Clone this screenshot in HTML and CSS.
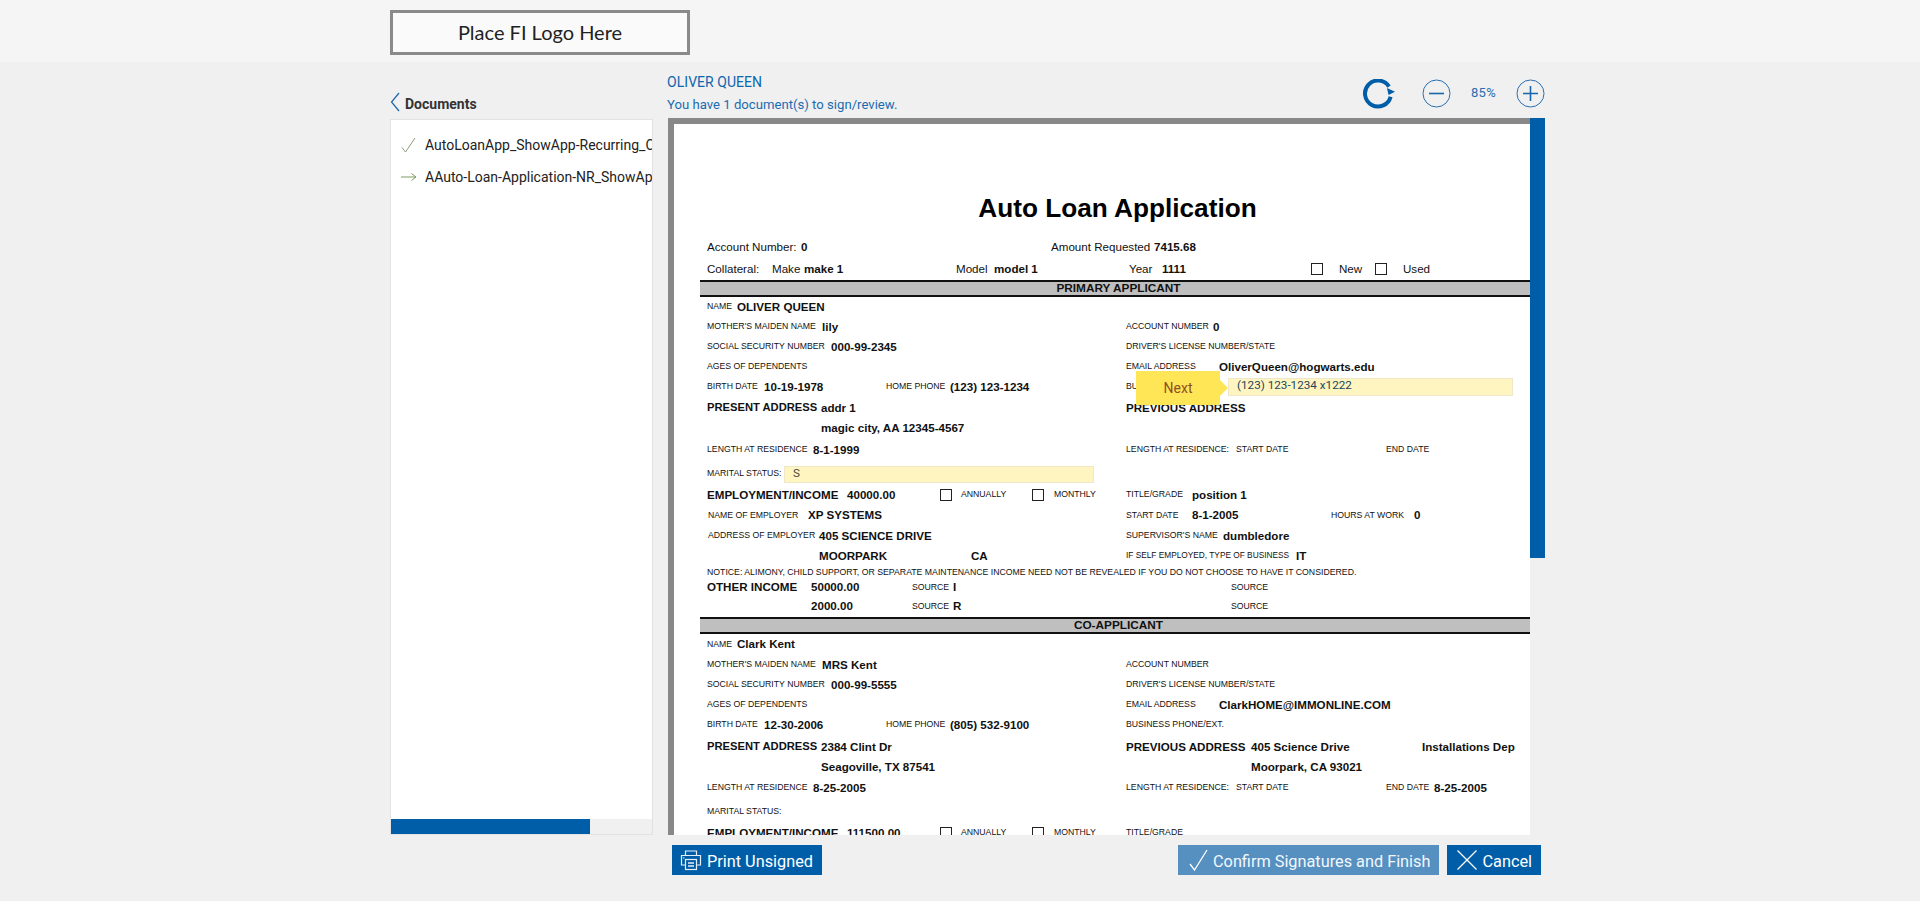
FILE: index.html
```html
<!DOCTYPE html>
<html lang="en">
<head>
<meta charset="utf-8">
<title>Auto Loan Application</title>
<link rel="stylesheet" href="styles.css">
</head>
<body>
<header class="topbar">
  <div class="container"><div class="logo">Place FI Logo Here</div></div>
</header>
<main class="container layout">
  <aside class="sidebar">
    <div class="side-head">
      <svg class="chevron" width="10" height="20" viewBox="0 0 10 20"><path d="M9 1 1.5 10 9 19" fill="none" stroke="#1a66aa" stroke-width="1.2"/></svg>
      <span class="side-title">Documents</span>
    </div>
    <div class="doc-panel">
      <ul class="doc-list">
        <li class="doc-item">
          <svg class="doc-icon" width="16" height="16" viewBox="0 0 16 16"><path d="M1 10.5 4.5 15 14 1" fill="none" stroke="#8f9c7c" stroke-width="1"/></svg>
          <span class="doc-name">AutoLoanApp_ShowApp-Recurring_Charges</span>
        </li>
        <li class="doc-item">
          <svg class="doc-icon" width="16" height="16" viewBox="0 0 16 16"><path d="M0 8H15M10.5 4.5 15 8l-4.5 3.5" fill="none" stroke="#7f9a60" stroke-width="1"/></svg>
          <span class="doc-name">AAuto-Loan-Application-NR_ShowApp-Recurring</span>
        </li>
      </ul>
      <div class="hscroll"><div class="hthumb"></div></div>
    </div>
  </aside>
  <section class="content">
    <div class="content-head">
      <div class="who">
        <div class="who-name">OLIVER QUEEN</div>
        <div class="who-note">You have 1 document(s) to sign/review.</div>
      </div>
      <div class="tools">
        <svg class="reload" width="33" height="30" viewBox="0 0 33 30"><path d="M27.6 17.7A13 13 0 1 1 26 7.6" fill="none" stroke="#005ea8" stroke-width="4"/><path d="M32 12.7 24 9l1.5 7z" fill="#005ea8"/></svg>
        <svg class="zoom-btn" width="29" height="29" viewBox="0 0 29 29"><circle cx="14.5" cy="14.5" r="13.5" fill="none" stroke="#2a6fb0"/><path d="M7 14.5H22" stroke="#1a66aa" stroke-width="1.6"/></svg>
        <span class="zoom-val">85%</span>
        <svg class="zoom-btn" width="29" height="29" viewBox="0 0 29 29"><circle cx="14.5" cy="14.5" r="13.5" fill="none" stroke="#2a6fb0"/><path d="M7 14.5H22M14.5 7V22" stroke="#1a66aa" stroke-width="1.6"/></svg>
      </div>
    </div>
    <div class="viewer">
      <div class="pdf">
        <article class="page">
          <h1 class="title">Auto Loan Application</h1>
          <div class="row h21 txt"><span class="w94">Account Number:</span><b class="w250">0</b><span class="w103">Amount Requested</span><b>7415.68</b></div>
          <div class="row h22 txt"><span class="w65">Collateral:</span><span class="w32">Make</span><b class="w152">make 1</b><span class="w38">Model</span><b class="w135">model 1</b><span class="w33">Year</span><b class="w149">1111</b><i class="cb m16"></i><span class="w36">New</span><i class="cb m16"></i><span>Used</span></div>
          <div class="band">PRIMARY APPLICANT</div>

          <div class="row h20"><div class="left"><small class="w30">NAME</small><b>OLIVER QUEEN</b></div></div>
          <div class="row h20"><div class="left"><small class="w115">MOTHER'S MAIDEN NAME</small><b>lily</b></div><div class="right"><small class="w87">ACCOUNT NUMBER</small><b>0</b></div></div>
          <div class="row h20"><div class="left"><small class="w124">SOCIAL SECURITY NUMBER</small><b>000-99-2345</b></div><div class="right"><small>DRIVER'S LICENSE NUMBER/STATE</small></div></div>
          <div class="row h20"><div class="left"><small>AGES OF DEPENDENTS</small></div><div class="right"><small class="w93">EMAIL ADDRESS</small><b>OliverQueen@hogwarts.edu</b></div></div>
          <div class="row h20"><div class="left"><small class="w57">BIRTH DATE</small><b class="w122">10-19-1978</b><small class="w64">HOME PHONE</small><b>(123) 123-1234</b></div><div class="right"><small class="w102 covered">BUSINESS PHONE/EXT.</small><span class="field field-phone">(123) 123-1234 x1222</span></div></div>
          <div class="row h22"><div class="left"><b class="w114 narrow">PRESENT ADDRESS</b><b>addr 1</b></div><div class="right"><b>PREVIOUS ADDRESS</b></div></div>
          <div class="row h18"><div class="left"><span class="w114"></span><b>magic city, AA 12345-4567</b></div></div>
          <div class="row h26"><div class="left"><small class="w106">LENGTH AT RESIDENCE</small><b>8-1-1999</b></div><div class="right"><small class="w110">LENGTH AT RESIDENCE:</small><small class="w150">START DATE</small><small>END DATE</small></div></div>
          <div class="row h22"><div class="left"><small class="w77">MARITAL STATUS:</small><span class="field field-status">S</span></div></div>
          <div class="row h20"><div class="left"><b class="w140">EMPLOYMENT/INCOME</b><b class="w93">40000.00</b><i class="cb m9"></i><small class="w71">ANNUALLY</small><i class="cb m10"></i><small>MONTHLY</small></div><div class="right"><small class="w66">TITLE/GRADE</small><b>position 1</b></div></div>
          <div class="row h21"><div class="left nudge"><small class="w100">NAME OF EMPLOYER</small><b>XP SYSTEMS</b></div><div class="right"><small class="w66">START DATE</small><b class="w139">8-1-2005</b><small class="w83">HOURS AT WORK</small><b>0</b></div></div>
          <div class="row h20"><div class="left nudge"><small class="w111">ADDRESS OF EMPLOYER</small><b>405 SCIENCE DRIVE</b></div><div class="right"><small class="w97">SUPERVISOR'S NAME</small><b>dumbledore</b></div></div>
          <div class="row h20"><div class="left"><span class="w112"></span><b class="w152">MOORPARK</b><b>CA</b></div><div class="right"><small class="w170 tight">IF SELF EMPLOYED, TYPE OF BUSINESS</small><b>IT</b></div></div>
          <div class="row h13"><small class="notice">NOTICE: ALIMONY, CHILD SUPPORT, OR SEPARATE MAINTENANCE INCOME NEED NOT BE REVEALED IF YOU DO NOT CHOOSE TO HAVE IT CONSIDERED.</small></div>
          <div class="row h17"><div class="left"><b class="w104">OTHER INCOME</b><b class="w101">50000.00</b><small class="w41">SOURCE</small><b>I</b></div><div class="right"><span class="w105"></span><small>SOURCE</small></div></div>
          <div class="row h21"><div class="left"><span class="w104"></span><b class="w101">2000.00</b><small class="w41">SOURCE</small><b>R</b></div><div class="right"><span class="w105"></span><small>SOURCE</small></div></div>
          <div class="band">CO-APPLICANT</div>

          <div class="row h21"><div class="left"><small class="w30">NAME</small><b>Clark Kent</b></div></div>
          <div class="row h20"><div class="left"><small class="w115">MOTHER'S MAIDEN NAME</small><b>MRS Kent</b></div><div class="right"><small>ACCOUNT NUMBER</small></div></div>
          <div class="row h20"><div class="left"><small class="w124">SOCIAL SECURITY NUMBER</small><b>000-99-5555</b></div><div class="right"><small>DRIVER'S LICENSE NUMBER/STATE</small></div></div>
          <div class="row h20"><div class="left"><small>AGES OF DEPENDENTS</small></div><div class="right"><small class="w93">EMAIL ADDRESS</small><b>ClarkHOME@IMMONLINE.COM</b></div></div>
          <div class="row h20"><div class="left"><small class="w57">BIRTH DATE</small><b class="w122">12-30-2006</b><small class="w64">HOME PHONE</small><b>(805) 532-9100</b></div><div class="right"><small>BUSINESS PHONE/EXT.</small></div></div>
          <div class="row h24"><div class="left"><b class="w114 narrow">PRESENT ADDRESS</b><b>2384 Clint Dr</b></div><div class="right"><b class="w125">PREVIOUS ADDRESS</b><b class="w171">405 Science Drive</b><b>Installations Dep</b></div></div>
          <div class="row h16"><div class="left"><span class="w114"></span><b>Seagoville, TX 87541</b></div><div class="right"><span class="w125"></span><b>Moorpark, CA 93021</b></div></div>
          <div class="row h26"><div class="left"><small class="w106">LENGTH AT RESIDENCE</small><b>8-25-2005</b></div><div class="right"><small class="w110">LENGTH AT RESIDENCE:</small><small class="w150">START DATE</small><small class="w48">END DATE</small><b>8-25-2005</b></div></div>
          <div class="row h22"><div class="left"><small>MARITAL STATUS:</small></div></div>
          <div class="row h20"><div class="left"><b class="w140">EMPLOYMENT/INCOME</b><b class="w93">111500.00</b><i class="cb m9"></i><small class="w71">ANNUALLY</small><i class="cb m10"></i><small>MONTHLY</small></div><div class="right"><small>TITLE/GRADE</small></div></div>

          <div class="next-tip">Next</div>
        </article>
      </div>
      <div class="vscroll"><div class="vthumb"></div></div>
    </div>
    <div class="actions">
      <button class="btn" type="button">
        <svg class="btn-icon" width="22" height="21" viewBox="0 0 22 21"><g fill="none" stroke="#e6eef8" stroke-width="1.2"><path d="M5.5 5V1h11v4"/><path d="M5 15H1.5V5.5h19V15H17"/><rect x="5.5" y="9.5" width="11" height="10"/><path d="M8 13h6M8 16h6" stroke-width="1.4"/><path d="M3 8h1.5"/></g></svg>
        Print Unsigned
      </button>
      <div class="actions-right">
        <button class="btn btn-muted" type="button">
          <svg class="btn-icon" width="19" height="22" viewBox="0 0 19 22"><path d="M1 15 5.5 21 18 1" fill="none" stroke="#fff" stroke-width="1.3"/></svg>
          Confirm Signatures and Finish
        </button>
        <button class="btn" type="button">
          <svg class="btn-icon" width="20" height="20" viewBox="0 0 20 20"><path d="M0.5 0.5 19.5 19.5M19.5 0.5 0.5 19.5" fill="none" stroke="#fff" stroke-width="1.3"/></svg>
          Cancel
        </button>
      </div>
    </div>
  </section>
</main>
</body>
</html>
```
FILE: styles.css
```css
* { box-sizing: border-box; }
html, body { margin: 0; height: 901px; overflow: hidden; }
body { background: #f0f0f0; font-family: Roboto, "Liberation Sans", sans-serif; color: #333; }

.container { width: 1170px; margin: 0 auto; padding-left: 15px; }

.topbar { background: #f5f5f5; height: 62px; padding-top: 10px; }
.logo { width: 300px; height: 45px; padding-bottom: 2px; border: 3px solid #8a8a8a; background: #fafafa; display: flex; align-items: center; justify-content: center; font-family: Lato, sans-serif; font-size: 20px; color: #222; }

.layout { display: flex; height: 839px; }

.sidebar { width: 263px; margin-right: 15px; flex: none; }
.side-head { height: 57px; display: flex; align-items: flex-end; padding-bottom: 5px; }
.chevron { margin-right: 5px; margin-bottom: 2px; flex: none; }
.side-title { font-size: 14px; font-weight: 700; line-height: 20px; color: #333; }
.doc-panel { height: 716px; background: #fff; border: 1px solid #e2e2e2; display: flex; flex-direction: column; justify-content: space-between; }
.doc-list { list-style: none; margin: 0; padding: 9px 0 0 10px; overflow: hidden; }
.doc-item { height: 32px; display: flex; align-items: center; white-space: nowrap; }
.doc-icon { flex: none; margin-right: 8px; }
.doc-name { font-size: 14px; color: #222; }
.hscroll { height: 15px; background: #f0f0f0; flex: none; }
.hthumb { width: 199px; height: 15px; background: #005ea8; }

.content { width: 877px; flex: none; }
.content-head { height: 56px; display: flex; justify-content: space-between; }
.who { padding-top: 11px; margin-left: -1px; color: #1a6cb0; }
.who-name { font-size: 14px; line-height: 18px; color: #0f66ad; letter-spacing: 0.05px; }
.who-note { font-size: 13.15px; line-height: 18px; margin-top: 5px; }
.tools { display: flex; align-items: flex-start; padding-top: 17px; }
.reload { margin-right: 26px; }
.zoom-val { width: 65px; text-align: center; font-size: 13px; line-height: 28px; color: #2a6db0; letter-spacing: 0.3px; }

.viewer { display: flex; height: 717px; }
.pdf { width: 862px; height: 717px; border-top: 6px solid #888; border-left: 6px solid #888; background: #fff; overflow: hidden; }
.vscroll { width: 15px; }
.vthumb { height: 440px; background: #005ea8; }

.page { position: relative; padding-top: 64px; font-family: "Liberation Sans", Arial, sans-serif; font-size: 11.6px; color: #111; }
.title { margin: 0 0 9px; height: 40px; line-height: 40px; font-size: 26.2px; font-weight: 700; text-align: center; color: #000; padding-left: 31px; }
.row { display: flex; align-items: center; padding-left: 33px; padding-bottom: 2px; white-space: nowrap; }
.left { display: flex; align-items: center; width: 419px; flex: none; }
.right { display: flex; align-items: center; flex: none; }
.nudge { padding-left: 1px; }
.row b, .row span, .row small, .row i { flex: none; }
.row b { font-weight: 700; }
.row small { font-size: 8.7px; }
.row .tight { font-size: 8.3px; }
.row .notice { font-size: 8.73px; }
.row .narrow { font-size: 11.2px; }
.band { height: 17px; margin-left: 26px; padding-left: 7px; border-top: 2px solid #111; border-bottom: 2px solid #111; background: #bfbfbf; text-align: center; font-weight: 700; font-size: 11.8px; line-height: 13px; color: #111; }
.cb { display: block; width: 12px; height: 12px; margin-top: 2px; border: 1.5px solid #222; }
.m16 { margin-right: 16px; }
.m9 { margin-right: 9px; }
.m10 { margin-right: 10px; }

.field { display: block; margin-top: 2px; background: #fff5c0; border: 1.5px solid #eee8c8; font-family: Roboto, sans-serif; font-size: 11.7px; line-height: 13px; color: #4a4a3a; }
.field-phone { width: 285px; height: 18px; padding-left: 8px; color: #24445c; }
.field-status { width: 310px; height: 17px; padding-left: 8px; }
.next-tip { position: absolute; left: 462px; top: 247px; width: 84px; height: 34px; background: #ffe657; font-family: Roboto, sans-serif; font-size: 14px; line-height: 34px; text-align: center; color: #8f4f1f; }
.next-tip::after { content: ""; position: absolute; left: 84px; top: 9px; border-left: 8px solid #ffe657; border-top: 8px solid transparent; border-bottom: 8px solid transparent; }

.h13 { height: 13px; } .h16 { height: 16px; } .h17 { height: 17px; } .h18 { height: 18px; }
.h20 { height: 20px; } .h21 { height: 21px; } .h22 { height: 22px; } .h24 { height: 24px; } .h26 { height: 26px; }

.w30 { width: 30px; } .w32 { width: 32px; } .w33 { width: 33px; } .w36 { width: 36px; } .w38 { width: 38px; }
.w41 { width: 41px; } .w48 { width: 48px; } .w57 { width: 57px; } .w64 { width: 64px; } .w65 { width: 65px; }
.w66 { width: 66px; } .w71 { width: 71px; } .w77 { width: 77px; } .w83 { width: 83px; } .w87 { width: 87px; }
.w93 { width: 93px; } .w94 { width: 94px; } .w97 { width: 97px; } .w100 { width: 100px; } .w101 { width: 101px; }
.w102 { width: 102px; overflow: hidden; } .w103 { width: 103px; } .w104 { width: 104px; } .w105 { width: 105px; } .w106 { width: 106px; }
.w110 { width: 110px; } .w111 { width: 111px; } .w112 { width: 112px; } .w114 { width: 114px; } .w115 { width: 115px; }
.w122 { width: 122px; } .w124 { width: 124px; } .w125 { width: 125px; } .w135 { width: 135px; } .w139 { width: 139px; }
.w140 { width: 140px; } .w149 { width: 149px; } .w150 { width: 150px; } .w152 { width: 152px; } .w170 { width: 170px; }
.w171 { width: 171px; } .w250 { width: 250px; }

.actions { display: flex; justify-content: space-between; padding: 10px 4px 0; }
.actions-right { display: flex; gap: 8px; }
.btn { height: 30px; border: 0; padding: 2px 9px 0 8px; background: #005ea8; color: #fff; font-family: Roboto, sans-serif; font-size: 16.3px; display: flex; align-items: center; gap: 5px; }
.actions-right .btn { padding-left: 10px; }
.actions-right .btn-muted { padding-left: 11px; background: #5590c1; color: #f2f7fb; }
.btn-icon { flex: none; margin-top: -2px; }
```
